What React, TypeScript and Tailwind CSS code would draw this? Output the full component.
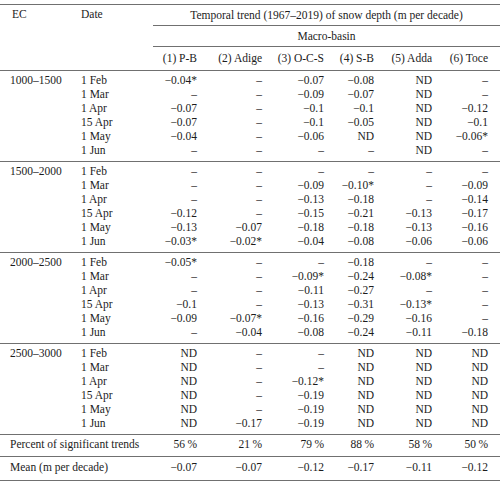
import React from "react";

const basins = ["(1) P-B", "(2) Adige", "(3) O-C-S", "(4) S-B", "(5) Adda", "(6) Toce"];
const pad = ["pr-[6px]", "pr-[6px]", "pr-[6px]", "pr-[6px]", "pr-[6px]", "pr-[12px]"];

const blocks: { ec: string; rows: [string, string[]][] }[] = [
  {
    ec: "1000–1500",
    rows: [
      ["1 Feb", ["−0.04*", "–", "−0.07", "−0.08", "ND", "–"]],
      ["1 Mar", ["–", "–", "−0.09", "−0.07", "ND", "–"]],
      ["1 Apr", ["−0.07", "–", "−0.1", "−0.1", "ND", "−0.12"]],
      ["15 Apr", ["−0.07", "–", "−0.1", "−0.05", "ND", "−0.1"]],
      ["1 May", ["−0.04", "–", "−0.06", "ND", "ND", "−0.06*"]],
      ["1 Jun", ["–", "–", "–", "–", "ND", "–"]],
    ],
  },
  {
    ec: "1500–2000",
    rows: [
      ["1 Feb", ["–", "–", "–", "–", "–", "–"]],
      ["1 Mar", ["–", "–", "−0.09", "−0.10*", "–", "−0.09"]],
      ["1 Apr", ["–", "–", "−0.13", "−0.18", "–", "−0.14"]],
      ["15 Apr", ["−0.12", "–", "−0.15", "−0.21", "−0.13", "−0.17"]],
      ["1 May", ["−0.13", "−0.07", "−0.18", "−0.18", "−0.13", "−0.16"]],
      ["1 Jun", ["−0.03*", "−0.02*", "−0.04", "−0.08", "−0.06", "−0.06"]],
    ],
  },
  {
    ec: "2000–2500",
    rows: [
      ["1 Feb", ["−0.05*", "–", "–", "−0.18", "–", "–"]],
      ["1 Mar", ["–", "–", "−0.09*", "−0.24", "−0.08*", "–"]],
      ["1 Apr", ["–", "–", "−0.11", "−0.27", "–", "–"]],
      ["15 Apr", ["−0.1", "–", "−0.13", "−0.31", "−0.13*", "–"]],
      ["1 May", ["−0.09", "−0.07*", "−0.16", "−0.29", "−0.16", "–"]],
      ["1 Jun", ["–", "−0.04", "−0.08", "−0.24", "−0.11", "−0.18"]],
    ],
  },
  {
    ec: "2500–3000",
    rows: [
      ["1 Feb", ["ND", "–", "–", "ND", "ND", "ND"]],
      ["1 Mar", ["ND", "–", "–", "ND", "ND", "ND"]],
      ["1 Apr", ["ND", "–", "−0.12*", "ND", "ND", "ND"]],
      ["15 Apr", ["ND", "–", "−0.19", "ND", "ND", "ND"]],
      ["1 May", ["ND", "–", "−0.19", "ND", "ND", "ND"]],
      ["1 Jun", ["ND", "−0.17", "−0.19", "ND", "ND", "ND"]],
    ],
  },
];

const percent = ["56\u2009%", "21\u2009%", "79\u2009%", "88\u2009%", "58\u2009%", "50\u2009%"];
const means = ["−0.07", "−0.07", "−0.12", "−0.17", "−0.11", "−0.12"];

export default function App() {
  return (
    <div className="w-[500px] h-[501px] bg-white pt-[4px] font-['Liberation_Serif',serif] text-[11.5px] text-[#1c1c1c]">
      <table className="w-[500px] border-collapse table-fixed">
        <colgroup>
          <col className="w-[72px]" />
          <col className="w-[71px]" />
          <col className="w-[60px]" />
          <col className="w-[65px]" />
          <col className="w-[62px]" />
          <col className="w-[50px]" />
          <col className="w-[58px]" />
          <col className="w-[62px]" />
        </colgroup>
        <thead>
          <tr className="h-[21px] border-t border-[#707070]">
            <td rowSpan={3} className="align-top pt-[3px] pl-[12px] leading-[13px] border-b border-[#707070]">EC</td>
            <td rowSpan={3} className="align-top pt-[3px] pl-[9px] leading-[13px] border-b border-[#707070]">Date</td>
            <td colSpan={6} className="p-0 pl-[10px]">
              <div className="h-[21px] leading-[20px] text-center border-b border-[#707070]">
                Temporal trend (1967–2019) of snow depth (m per decade)
              </div>
            </td>
          </tr>
          <tr className="h-[21px]">
            <td colSpan={6} className="p-0 pl-[10px]">
              <div className="h-[21px] leading-[20px] text-center border-b border-[#707070]">Macro-basin</div>
            </td>
          </tr>
          <tr className="h-[23px]">
            {basins.map((b, i) => (
              <td key={b} className={`text-right whitespace-nowrap border-b border-[#707070] ${pad[i]}`}>{b}</td>
            ))}
          </tr>
        </thead>
        {blocks.map((blk) => (
          <tbody key={blk.ec} className="border-b border-[#707070]">
            {blk.rows.map(([date, vals], r) => {
              const h = r === 0 ? "h-[17px] align-bottom" : r === 5 ? "h-[18px] align-top" : "h-[14px] align-middle";
              return (
                <tr key={date} className={h}>
                  <td className="pl-[10px] leading-[14px] whitespace-nowrap">{r === 0 ? blk.ec : ""}</td>
                  <td className="pl-[9px] leading-[14px] whitespace-nowrap">{date}</td>
                  {vals.map((v, i) => (
                    <td key={i} className={`text-right leading-[14px] whitespace-nowrap ${pad[i]}`}>{v}</td>
                  ))}
                </tr>
              );
            })}
          </tbody>
        ))}
        <tbody>
          <tr className="h-[22px] border-b border-[#707070]">
            <td colSpan={2} className="pl-[10px] whitespace-nowrap">Percent of significant trends</td>
            {percent.map((v, i) => (
              <td key={i} className={`text-right whitespace-nowrap ${pad[i]}`}>{v}</td>
            ))}
          </tr>
          <tr className="h-[24px] border-b border-[#707070]">
            <td colSpan={2} className="pl-[10px] whitespace-nowrap">Mean (m per decade)</td>
            {means.map((v, i) => (
              <td key={i} className={`text-right whitespace-nowrap ${pad[i]}`}>{v}</td>
            ))}
          </tr>
        </tbody>
      </table>
    </div>
  );
}
